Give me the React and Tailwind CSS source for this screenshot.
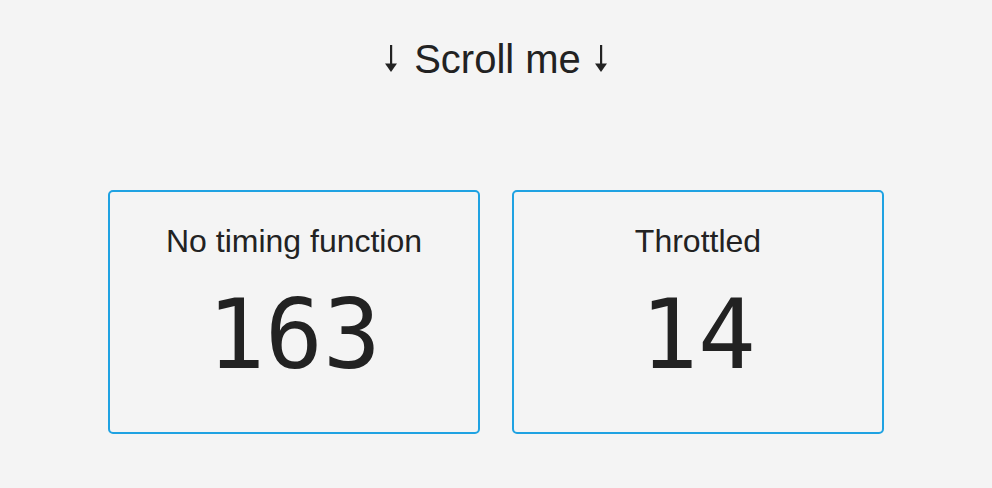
const boxes = [
  { label: "No timing function", count: 163 },
  { label: "Throttled", count: 14 },
];

// the down arrow beside the title
const DownArrow = ({ className }) => (
  <svg width="12" height="27" viewBox="0 0 12 27" className={className} fill="#222">
    <rect x="5" y="0" width="2.2" height="20" />
    <polygon points="0,18.5 12,18.5 6,27" />
  </svg>
);

const CounterBox = ({ label, count }) => (
  <div className="w-[372px] h-[244px] border-2 border-[#1fa2e2] rounded-[5px] flex flex-col items-center pt-[33px]">
    <div className="text-[32px] leading-none text-[#222]">{label}</div>
    <div
      className="mt-[30px] text-[96px] leading-none text-[#222]"
      style={{ fontFamily: '"DejaVu Sans Mono", monospace' }}
    >
      {count}
    </div>
  </div>
);

const App = () => {
  return (
    <div
      className="w-[992px] h-[488px] bg-[#f4f4f4] flex flex-col items-center pt-[39px]"
      style={{ fontFamily: '"Liberation Sans", Arial, sans-serif' }}
    >
      <h1 className="flex items-center text-[40px] leading-none text-[#222]">
        <DownArrow className="mr-[17px] mt-[-2px]" />
        <span>Scroll me</span>
        <DownArrow className="ml-[14px] mt-[-2px]" />
      </h1>

      <div className="mt-[111px] flex gap-8">
        {boxes.map((b) => (
          <CounterBox key={b.label} label={b.label} count={b.count} />
        ))}
      </div>
    </div>
  );
};

export default App;
